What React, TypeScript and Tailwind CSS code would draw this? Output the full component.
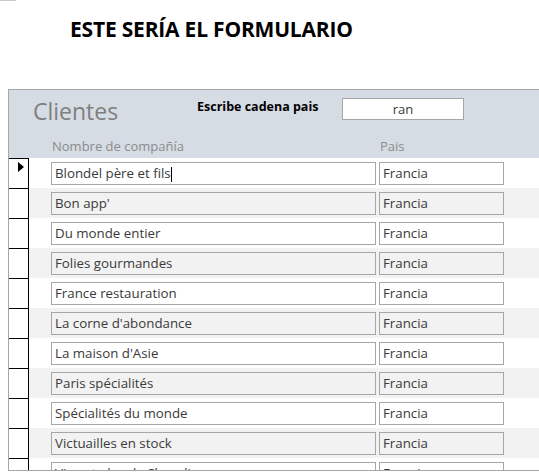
import React from 'react'

const rows = [
    'Blondel père et fils',
    "Bon app'",
    'Du monde entier',
    'Folies gourmandes',
    'France restauration',
    "La corne d'abondance",
    "La maison d'Asie",
    'Paris spécialités',
    'Spécialités du monde',
    'Victuailles en stock',
    'Vins et alcools Chevalier',
]

const font = { fontFamily: '"Open Sans", "Noto Sans", sans-serif' }

function Row({ name, index }: { name: string; index: number }) {
    const alt = index % 2 === 1
    const box = `h-[23px] border border-[#a6a6a6] pl-[3px] text-[13.3px] leading-[21px] text-[#3a3a3a] whitespace-nowrap overflow-hidden ${alt ? 'bg-[#f2f2f2]' : 'bg-white'}`
    return (
        <div className="flex h-[30px]">
            <div className="relative w-[20px] shrink-0 border-t border-r border-black bg-white">
                {index === 0 && (
                    <div className="absolute left-[9px] top-[3px] h-0 w-0 border-y-[5px] border-l-[6px] border-y-transparent border-l-black" />
                )}
            </div>
            <div className={`flex flex-1 items-start pt-[4px] pl-[22px] gap-[3px] ${alt ? 'bg-[#f2f2f2]' : 'bg-white'}`}>
                <div className={`${box} w-[325px]`}>
                    {name}
                    {index === 0 && <span className="inline-block w-px h-[15px] bg-black align-middle" />}
                </div>
                <div className={`${box} w-[125px]`}>Francia</div>
            </div>
        </div>
    )
}

export default function App() {
    return (
        <div className="relative h-[472px] w-[539px] overflow-hidden bg-white" style={font}>
            <div className="absolute left-0 top-0 h-px w-[16px] bg-[#c8c8c8]" />
            <div className="h-[89px] pl-[70px] pt-[14px]">
                <h1 className="text-[21px] font-bold text-black leading-[30px] tracking-[-0.2px]">ESTE SERÍA EL FORMULARIO</h1>
            </div>
            <div className="ml-[8px] h-[382px] overflow-hidden border-t border-l border-b border-[#a6a6a6]">
                <div className="flex h-[68px] flex-col bg-[#d6dce4]">
                    <div className="flex items-start h-[47px]">
                        <div className="w-[188px] pl-[24px] pt-[6px] text-[23px] leading-[30px] text-[#7f7f7f]">Clientes</div>
                        <div className="w-[145px] pt-[8px] text-[12.5px] font-bold leading-[18px] text-black">Escribe cadena pais</div>
                        <div className="mt-[8px] h-[22px] w-[122px] border border-[#a6a6a6] bg-white text-center text-[13px] leading-[20px] text-[#3a3a3a]">ran</div>
                    </div>
                    <div className="flex text-[13px] leading-[18px] text-[#8c8c8c]">
                        <div className="w-[371px] pl-[43px]">Nombre de compañía</div>
                        <div>Pais</div>
                    </div>
                </div>
                {rows.map((r, i) => (
                    <Row key={r} name={r} index={i} />
                ))}
            </div>
        </div>
    )
}
